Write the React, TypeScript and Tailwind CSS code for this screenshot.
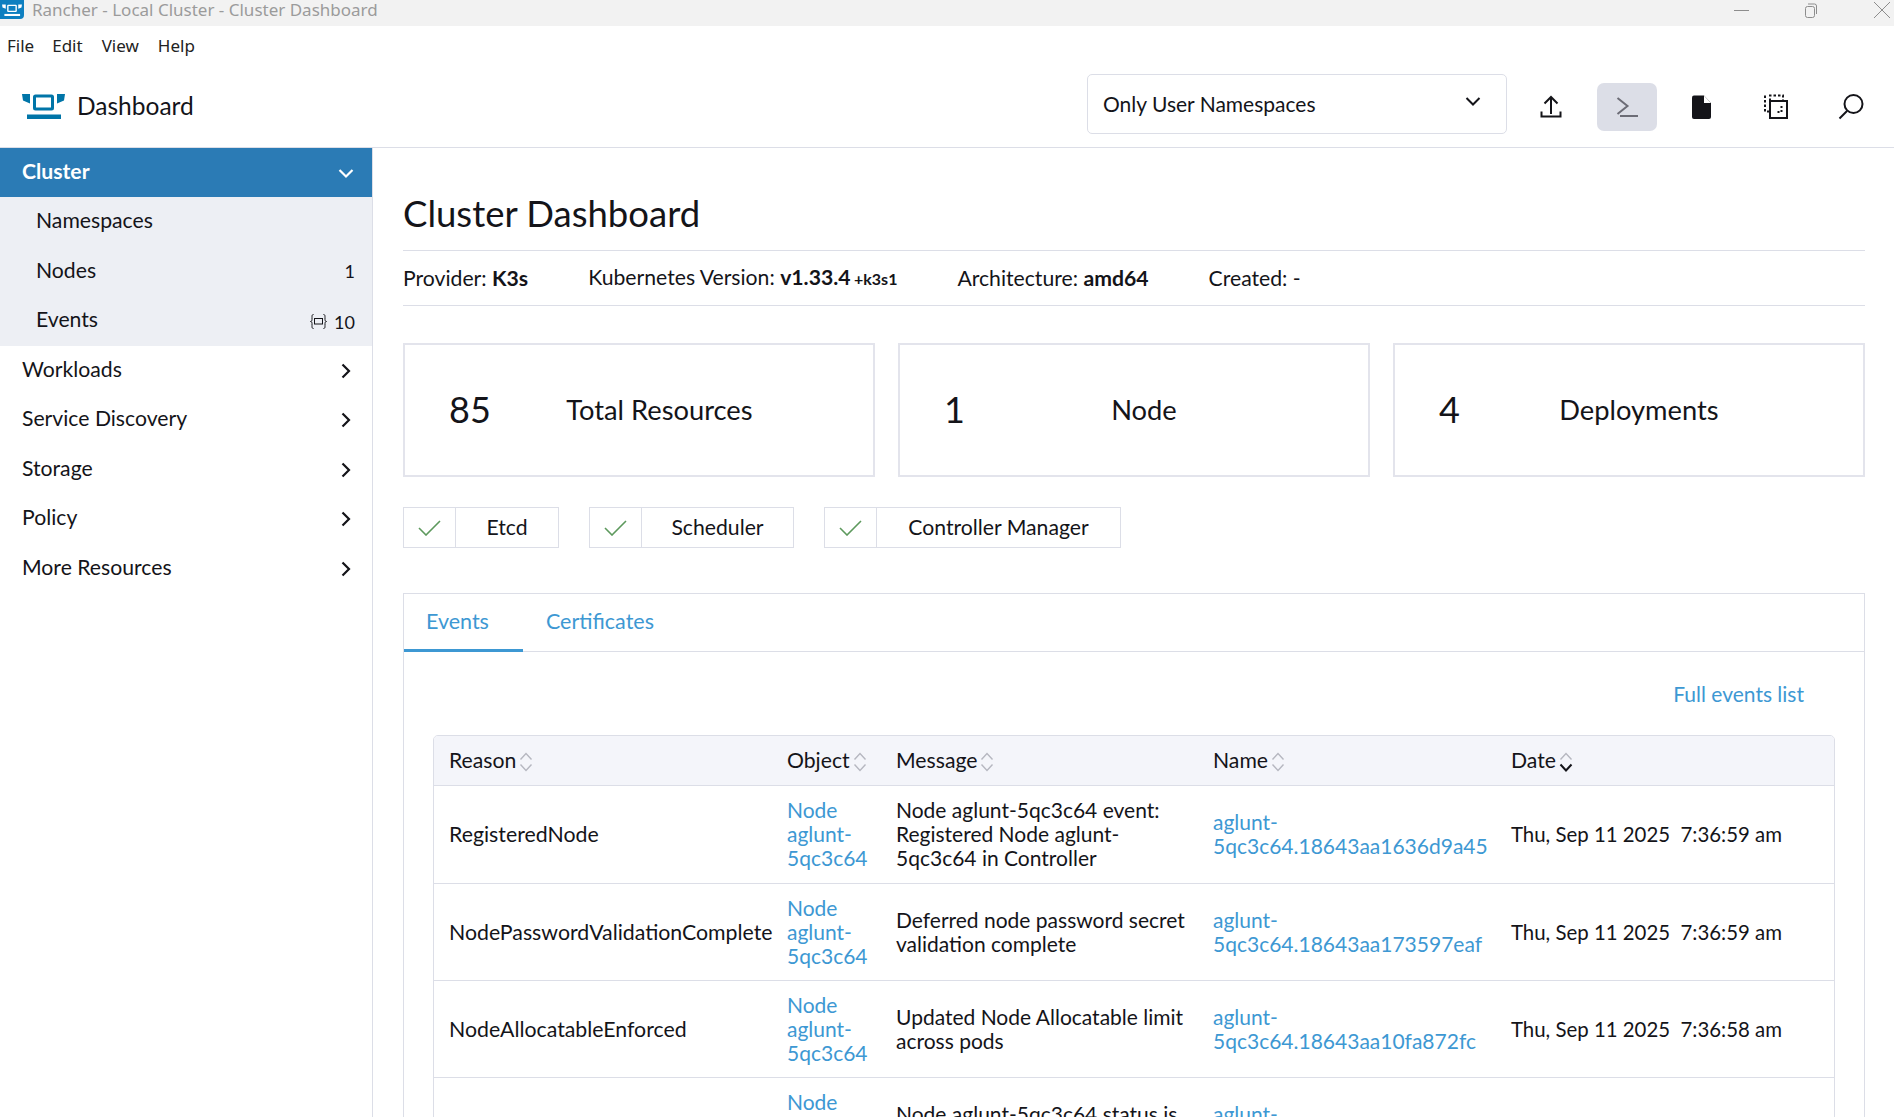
const events = [
  {
    reason: 'RegisteredNode',
    message: 'Node aglunt-5qc3c64 event: Registered Node aglunt-5qc3c64 in Controller',
    name: 'aglunt-5qc3c64.18643aa1636d9a45',
    date: 'Thu, Sep 11 2025\u00a0\u00a07:36:59 am',
    rowClass: 'h-[98px] border-b border-[#dcdee7]',
  },
  {
    reason: 'NodePasswordValidationComplete',
    message: 'Deferred node password secret validation complete',
    name: 'aglunt-5qc3c64.18643aa173597eaf',
    date: 'Thu, Sep 11 2025\u00a0\u00a07:36:59 am',
    rowClass: 'h-[97px] border-b border-[#dcdee7]',
  },
  {
    reason: 'NodeAllocatableEnforced',
    message: 'Updated Node Allocatable limit across pods',
    name: 'aglunt-5qc3c64.18643aa10fa872fc',
    date: 'Thu, Sep 11 2025\u00a0\u00a07:36:58 am',
    rowClass: 'h-[97px] border-b border-[#dcdee7]',
  },
  {
    reason: 'NodeReady',
    message: 'Node aglunt-5qc3c64 status is now: NodeReady',
    name: 'aglunt-5qc3c64.18643aa1a3c9d1e0',
    date: 'Thu, Sep 11 2025\u00a0\u00a07:36:58 am',
    rowClass: 'h-[97px] border-b border-[#dcdee7]',
  },
]

function Logo({ color, className }: { color: string; className: string }) {
  return (
    <svg viewBox="0 0 43 26" className={className} fill="none">
      <path d="M0 1h8v9.5L1 7.5z" fill={color} />
      <path d="M43 1h-8v9.5l7-3z" fill={color} />
      <rect x="12.5" y="3" width="18" height="13" rx="1" stroke={color} strokeWidth="3" />
      <rect x="5" y="21.5" width="34" height="4.5" fill={color} />
    </svg>
  )
}

function Chevron({ open }: { open?: boolean }) {
  return (
    <svg viewBox="0 0 16 16" className="w-4 h-4" fill="none" stroke="currentColor" strokeWidth="2.2">
      {open ? <path d="M1.5 5l6.5 6.5L14.500 5" /> : <path d="M4.500 1.500L11 8l-6.500 6.500" />}
    </svg>
  )
}

function Sorter({ active }: { active?: boolean }) {
  return (
    <svg viewBox="0 0 14 20" className="w-[14px] h-5 ml-[3px] mt-[3px]" fill="none">
      <path d="M1.500 7.500L7 1.500l5.500 6" stroke="#b6b7c0" strokeWidth="1.400" />
      <path
        d="M1.500 12.500L7 18.500l5.500-6"
        stroke={active ? '#141419' : '#b6b7c0'}
        strokeWidth={active ? 2 : 1.4}
      />
    </svg>
  )
}

function SideRow({ label }: { label: string }) {
  return (
    <div className="h-[49.5px] flex items-center justify-between pl-[22px] pr-[18px]">
      <span className="pb-[4px]">{label}</span>
      <Chevron />
    </div>
  )
}

function Card({ num, label }: { num: string; label: string }) {
  return (
    <div className="flex-1 h-[134px] border-2 border-[#e3e4ec] flex items-center pl-[44px] pr-[45px]">
      <span className="text-[36px] leading-none pb-[2px]">{num}</span>
      <span className="flex-1 text-center text-[27.300px]">{label}</span>
    </div>
  )
}

function Chip({ label, width }: { label: string; width: string }) {
  return (
    <div className={`h-[41px] flex items-center border border-[#dcdee7] ${width}`}>
      <div className="w-[52px] shrink-0 h-full flex items-center justify-center border-r border-[#dcdee7]">
        <svg viewBox="0 0 23 16" className="w-[23px] h-4" fill="none" stroke="#5d995d" strokeWidth="1.600">
          <path d="M1 8l7 7L22 1" />
        </svg>
      </div>
      <span className="flex-1 text-center text-[21.200px] pb-px">{label}</span>
    </div>
  )
}

export default function App() {
  return (
    <div className="w-[1894px] h-[1117px] overflow-hidden bg-white text-[#141419] text-[21px] leading-[24px] font-[Lato,sans-serif]">
      {/* window chrome */}
      <div className="h-[26px] bg-[#f2f2f2] flex items-center font-['Noto_Sans',sans-serif] text-[17px] text-[#9b9b9b]">
        <div className="w-6 h-[19px] self-start bg-[#0e7fc0] rounded-br-[4px] flex items-center justify-center">
          <Logo color="#ffffff" className="w-5 h-3" />
        </div>
        <span className="ml-2 flex-1 relative -top-[3px]">Rancher - Local Cluster - Cluster Dashboard</span>
        <div className="flex items-center h-full relative -top-[3px] text-[#8d8d8d]">
          <svg viewBox="0 0 16 16" className="w-4 h-4 mr-[53px]" fill="none" stroke="currentColor">
            <path d="M0 8.500h15" />
          </svg>
          <svg viewBox="0 0 16 16" className="w-4 h-4 mr-[55px]" fill="none" stroke="currentColor">
            <rect x="2.500" y="4.500" width="9" height="11" rx="2" />
            <path d="M5 2h6.500a2 2 0 0 1 2 2v8" />
          </svg>
          <svg viewBox="0 0 16 16" className="w-4 h-4 mr-[4px]" fill="none" stroke="currentColor">
            <path d="M0 0l16 16M16 0L0 16" />
          </svg>
        </div>
      </div>

      <div className="h-10 flex items-center font-['Noto_Sans',sans-serif] text-[17px] text-[#222]">
        <span className="ml-[7px]">File</span>
        <span className="ml-[18px]">Edit</span>
        <span className="ml-[19px]">View</span>
        <span className="ml-[19px]">Help</span>
      </div>

      {/* app header */}
      <header className="h-[82px] border-b border-[#dcdee7] flex items-center pl-[22px] pr-[13px]">
        <Logo color="#0075a8" className="w-[43px] h-[26px] -mt-[2px]" />
        <span className="ml-3 flex-1 text-[24.500px] pb-[2px]">Dashboard</span>

        <div className="w-[420px] h-[60px] -mt-[6px] mr-[15px] border border-[#dcdee7] rounded-[5px] flex items-center justify-between pl-[15px] pr-[25px]">
          <span>Only User Namespaces</span>
          <svg viewBox="0 0 16 9" className="w-4 h-[9px] -mt-[4px]" fill="none" stroke="#141419" strokeWidth="2">
            <path d="M1.500 1l6.500 6.500L14.500 1" />
          </svg>
        </div>

        <div className="flex gap-[15px]">
          <button className="w-[60px] h-12 flex items-center justify-center -ml-px">
            <svg viewBox="0 0 28 28" className="w-7 h-7" fill="none" stroke="#141419" strokeWidth="2">
              <path d="M14 4v17M7.500 10.500L14 4l6.500 6.500M4.500 18.500v5h19v-5" />
            </svg>
          </button>
          <button className="w-[60px] h-12 flex items-center justify-center bg-[#dcdee7] rounded-[7px] ml-px -mr-px">
            <svg viewBox="0 0 28 28" className="w-7 h-7" fill="none" stroke="#6c6c76" strokeWidth="2">
              <path d="M4.500 5l10 8-10 8M7 23h18" />
            </svg>
          </button>
          <button className="w-[60px] h-12 flex items-center justify-center">
            <svg viewBox="0 0 28 28" className="w-7 h-7">
              <path
                d="M5 4.500a2 2 0 0 1 2-2h10l7 7.500v14a2 2 0 0 1-2 2H7a2 2 0 0 1-2-2z"
                fill="#141419"
              />
              <path d="M17 2.500v7.500h7z" fill="#ffffff" />
            </svg>
          </button>
          <button className="w-[60px] h-12 flex items-center justify-center">
            <svg viewBox="0 0 28 28" className="w-7 h-7" fill="none" stroke="#141419">
              <path d="M8 8V2.500h13v5.500M3 2.500v16h4" strokeWidth="2" strokeDasharray="2.500 2" />
              <rect x="8" y="8" width="17" height="17" strokeWidth="2" />
              <path d="M19.500 13v6h-5" strokeWidth="2" strokeDasharray="2 2" />
            </svg>
          </button>
          <button className="w-[60px] h-12 flex items-center justify-center">
            <svg viewBox="0 0 28 28" className="w-7 h-7" fill="none" stroke="#141419" strokeWidth="2">
              <circle cx="16.500" cy="11" r="9" />
              <path d="M10 18l-7.500 7.500" />
            </svg>
          </button>
        </div>
      </header>

      <div className="flex h-[969px]">
        {/* side nav */}
        <aside className="w-[373px] shrink-0 border-r border-[#dcdee7] text-[21.200px]">
          <div className="h-[49px] bg-[#2b7bb5] text-white font-bold flex items-center justify-between pl-[22px] pr-[18px]">
            <span className="pb-[4px]">Cluster</span>
            <Chevron open />
          </div>
          <div className="bg-[#edeff4]">
            <div className="h-[49.5px] flex items-center pl-9 pb-[4px]">Namespaces</div>
            <div className="h-[49.5px] flex items-center justify-between pl-9 pr-[17px]">
              <span className="pb-[2px]">Nodes</span>
              <span className="text-[18px]">1</span>
            </div>
            <div className="h-[50px] flex items-center justify-between pl-9 pr-[17px]">
              <span className="pb-[4px]">Events</span>
              <span className="flex items-center text-[18px] mt-[1px]">
                <svg viewBox="0 0 17 15" className="w-[17px] h-[15px] mr-[7px]" fill="none" stroke="#141419">
                  <path d="M3.500 .5C2 .5 2 1.500 2 3.500v2c0 1.200-.5 2-1.500 2 1 0 1.500.8 1.500 2v2c0 2 0 3 1.500 3" />
                  <path d="M13.500 .5c1.500 0 1.500 1 1.500 3v2c0 1.200.5 2 1.500 2-1 0-1.500.8-1.500 2v2c0 2 0 3-1.500 3" />
                  <rect x="4.500" y="4.500" width="8" height="5.500" />
                </svg>
                10
              </span>
            </div>
          </div>
          <SideRow label="Workloads" />
          <SideRow label="Service Discovery" />
          <SideRow label="Storage" />
          <SideRow label="Policy" />
          <SideRow label="More Resources" />
        </aside>

        {/* page body */}
        <main className="flex-1 min-w-0 pl-[30px] pr-[29px]">
          <div className="h-[103px] border-b border-[#dcdee7] flex items-center">
            <h1 className="text-[36.5px] leading-none pt-[28px]">Cluster Dashboard</h1>
          </div>
          <div className="h-[55px] border-b border-[#dcdee7] flex items-center gap-[60px] text-[21.200px]">
            <span>
              Provider: <b>K3s</b>
            </span>
            <span>
              Kubernetes Version: <b>v1.33.4</b> <b className="text-[16px] -ml-[2px]">+k3s1</b>
            </span>
            <span>
              Architecture: <b>amd64</b>
            </span>
            <span>Created: -</span>
          </div>

          <div className="flex gap-[23px] mt-[37px]">
            <Card num="85" label="Total Resources" />
            <Card num="1" label="Node" />
            <Card num="4" label="Deployments" />
          </div>

          <div className="flex gap-[30px] mt-[30px]">
            <Chip label="Etcd" width="w-[156px]" />
            <Chip label="Scheduler" width="w-[205px]" />
            <Chip label="Controller Manager" width="w-[297px]" />
          </div>

          <section className="mt-[45px] border border-[#dcdee7] h-[600px]">
            <div className="h-[58px] border-b border-[#dcdee7] flex text-[#3d98d3] text-[21.500px]">
              <div className="pl-[22px] pr-[34px] flex items-center border-b-[3px] border-[#3d98d3] h-[58px] pb-[2px]">
                Events
              </div>
              <div className="pl-[23px] flex items-center h-[57px] pb-[4px]">Certificates</div>
            </div>
            <div className="px-[29px]">
              <div className="h-[83px] flex items-center justify-end pr-[31px]">
                <a className="text-[#3d98d3]">Full events list</a>
              </div>
              <div className="border border-[#dcdee7] rounded-t-[5px] overflow-hidden">
                <table className="w-full table-fixed border-collapse">
                  <colgroup>
                    <col className="w-[338px]" />
                    <col className="w-[109px]" />
                    <col className="w-[317px]" />
                    <col className="w-[298px]" />
                    <col />
                  </colgroup>
                  <thead>
                    <tr className="h-[49px] bg-[#f4f5fa] border-b border-[#dcdee7] text-left text-[21.200px]">
                      {['Reason', 'Object', 'Message', 'Name', 'Date'].map((h) => (
                        <th key={h} className="pl-[15px] font-normal">
                          <span className="flex items-center">
                            {h}
                            <Sorter active={h === 'Date'} />
                          </span>
                        </th>
                      ))}
                    </tr>
                  </thead>
                  <tbody>
                    {events.map((ev) => (
                      <tr key={ev.name} className={ev.rowClass}>
                        <td className="pl-[15px] text-[21.300px]">{ev.reason}</td>
                        <td className="pl-[15px] text-[#3d98d3]">Node aglunt-5qc3c64</td>
                        <td className="pl-[15px]">{ev.message}</td>
                        <td className="pl-[15px] text-[#3d98d3]">{ev.name}</td>
                        <td className="pl-[15px] text-[20.400px]">{ev.date}</td>
                      </tr>
                    ))}
                  </tbody>
                </table>
              </div>
            </div>
          </section>
        </main>
      </div>
    </div>
  )
}
